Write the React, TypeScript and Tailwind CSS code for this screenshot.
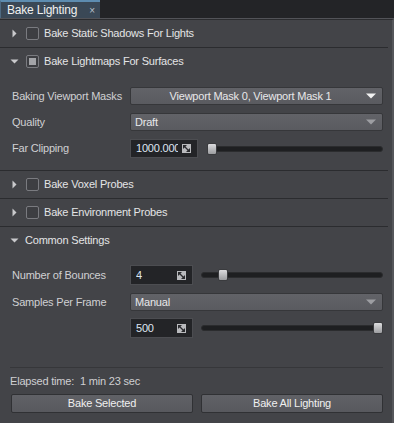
import React from "react";

const font = { fontFamily: '"Liberation Sans", Arial, sans-serif', letterSpacing: "-0.2px" };

function Arrow({ open }: { open?: boolean }) {
  return open ? (
    <svg width="9" height="9" viewBox="0 0 9 9" className="shrink-0">
      <path d="M0.5 2.5 L8.5 2.5 L4.5 6.5 Z" fill="#c9c9cc" />
    </svg>
  ) : (
    <svg width="9" height="9" viewBox="0 0 9 9" className="shrink-0">
      <path d="M2.5 0.5 L6.5 4.5 L2.5 8.5 Z" fill="#c9c9cc" />
    </svg>
  );
}

function Check({ checked }: { checked?: boolean }) {
  return (
    <div className="flex h-[13px] w-[13px] shrink-0 items-center justify-center rounded-[2px] border border-[#7a7b80] bg-[#3d3e42]">
      {checked && <div className="h-[7px] w-[7px] bg-[#a3a4a8]" />}
    </div>
  );
}

function Section({ label, checked, open }: { label: string; checked?: boolean; open?: boolean }) {
  return (
    <div className="flex h-[27px] items-center pl-[10px] text-[11px] text-[#e4e4e6]">
      <Arrow open={open} />
      <div className="ml-[7px]">
        <Check checked={checked} />
      </div>
      <span className="ml-[5px] whitespace-nowrap">{label}</span>
    </div>
  );
}

function Sep() {
  return <div className="mr-[4px] h-px bg-[#2b2c2f]" />;
}

function Caret({ dim }: { dim?: boolean }) {
  return (
    <svg width="10" height="6" viewBox="0 0 10 6" className="shrink-0">
      <path d="M0 0.5 L10 0.5 L5 5.5 Z" fill={dim ? "#9d9ea2" : "#f2f2f2"} />
    </svg>
  );
}

function Dropdown({ text, center, dim }: { text: string; center?: boolean; dim?: boolean }) {
  return (
    <div className="flex h-[18px] w-[253px] items-center rounded-[2px] border border-[#36373a] bg-gradient-to-b from-[#626368] to-[#5a5b60] pl-[4px] pr-[6px] text-[11px] text-[#e8e8ea]">
      <span className={center ? "flex-1 whitespace-nowrap text-center" : "flex-1 whitespace-nowrap"}>{text}</span>
      <Caret dim={dim} />
    </div>
  );
}

function SpinIcon() {
  return (
    <svg width="9" height="9" viewBox="0 0 9 9" className="shrink-0">
      <rect x="0" y="0" width="9" height="9" fill="#b9babd" />
      <path d="M1 1 L5 1 L1 5 Z" fill="#2a2b2e" />
      <path d="M8 8 L4 8 L8 4 Z" fill="#2a2b2e" />
      <path d="M2.5 2.5 L6.5 6.5" stroke="#2a2b2e" strokeWidth="1.2" />
    </svg>
  );
}

function NumberBox({ value, w }: { value: string; w: string }) {
  return (
    <div className={`flex shrink-0 items-center overflow-hidden border border-[#4c4d51] bg-[#232427] pl-[5px] pr-[6px] text-[11px] text-[#dfe6f2] ${w}`}>
      <span className="mr-[4px] flex-1 overflow-hidden whitespace-nowrap">{value}</span>
      <SpinIcon />
    </div>
  );
}

function Slider({ pos }: { pos: number }) {
  return (
    <div className="relative flex h-[14px] flex-1 items-center">
      <div className="h-[6px] w-full rounded-full border border-[#2b2c2e] bg-[#1e1f21]" />
      <div
        className="absolute top-[1px] h-[12px] w-[10px] rounded-[2px] border border-[#3a3b3e] bg-gradient-to-b from-[#dcdcde] to-[#9c9da0]"
        style={{ left: `calc(${pos}% - ${pos / 10}px)` }}
      />
    </div>
  );
}

function Prop({ label, children }: { label: string; children: React.ReactNode }) {
  return (
    <div className="flex items-center">
      <span className="w-[118px] shrink-0 whitespace-nowrap text-[11px] text-[#d0d0d3]">{label}</span>
      {children}
    </div>
  );
}

export default function App() {
  return (
    <div className="flex h-[423px] w-[394px] flex-col bg-[#232427]" style={font}>
      <div className="flex h-[19px] shrink-0 border-b border-[#525358]">
        <div className="flex w-[100px] items-center justify-between border-l border-t-2 border-[#5d8cb0] border-l-[#4e6a82] bg-[#3a4856] pl-[6px] pr-[5px] text-[12px] text-[#f0f0f0]">
          <span>Bake Lighting</span>
          <span className="text-[10px] text-[#b8c0c8]">×</span>
        </div>
      </div>
      <div className="flex flex-1 flex-col border-t border-[#2b2c2f] border-r-2 border-r-[#55565a] bg-[#434448]">
        <Section label="Bake Static Shadows For Lights" />
        <Sep />
        <Section label="Bake Lightmaps For Surfaces" checked open />
        <div className="flex flex-col gap-[8px] pb-[12px] pl-[12px] pt-[12px]">
          <Prop label="Baking Viewport Masks">
            <Dropdown text="Viewport Mask 0, Viewport Mask 1" center />
          </Prop>
          <Prop label="Quality">
            <Dropdown text="Draft" dim />
          </Prop>
          <Prop label="Far Clipping">
            <div className="flex w-[253px] items-center gap-[9px]">
              <NumberBox value="1000.000" w="h-[19px] w-[68px]" />
              <Slider pos={0} />
            </div>
          </Prop>
        </div>
        <Sep />
        <Section label="Bake Voxel Probes" />
        <Sep />
        <Section label="Bake Environment Probes" />
        <Sep />
        <div className="flex h-[27px] items-center pl-[10px] text-[11px] text-[#e4e4e6]">
          <Arrow open />
          <span className="ml-[6px]">Common Settings</span>
        </div>
        <div className="flex flex-col gap-[8px] pl-[12px] pt-[11px]">
          <Prop label="Number of Bounces">
            <div className="flex w-[253px] items-center gap-[8px]">
              <NumberBox value="4" w="h-[20px] w-[63px]" />
              <Slider pos={10} />
            </div>
          </Prop>
          <Prop label="Samples Per Frame">
            <Dropdown text="Manual" dim />
          </Prop>
          <div className="-mt-[1px]">
            <Prop label="">
              <div className="flex w-[253px] items-center gap-[8px]">
                <NumberBox value="500" w="h-[20px] w-[63px]" />
                <Slider pos={100} />
              </div>
            </Prop>
          </div>
        </div>
        <div className="flex-1" />
        <div className="mx-[10px] mr-[9px] h-px bg-[#36373a]" />
        <div className="flex h-[26px] items-center pl-[10px] text-[11px] text-[#cfcfd2]">
          <span>Elapsed time:</span>
          <span className="ml-[6px]">1 min 23 sec</span>
        </div>
        <div className="flex gap-[8px] pb-[10px] pl-[11px] pr-[9px]">
          <button className="h-[19px] flex-1 rounded-[2px] border border-[#303134] bg-gradient-to-b from-[#606166] to-[#58595e] text-[11px] text-[#f0f0f0]">
            Bake Selected
          </button>
          <button className="h-[19px] flex-1 rounded-[2px] border border-[#303134] bg-gradient-to-b from-[#606166] to-[#58595e] text-[11px] text-[#f0f0f0]">
            Bake All Lighting
          </button>
        </div>
      </div>
    </div>
  );
}
